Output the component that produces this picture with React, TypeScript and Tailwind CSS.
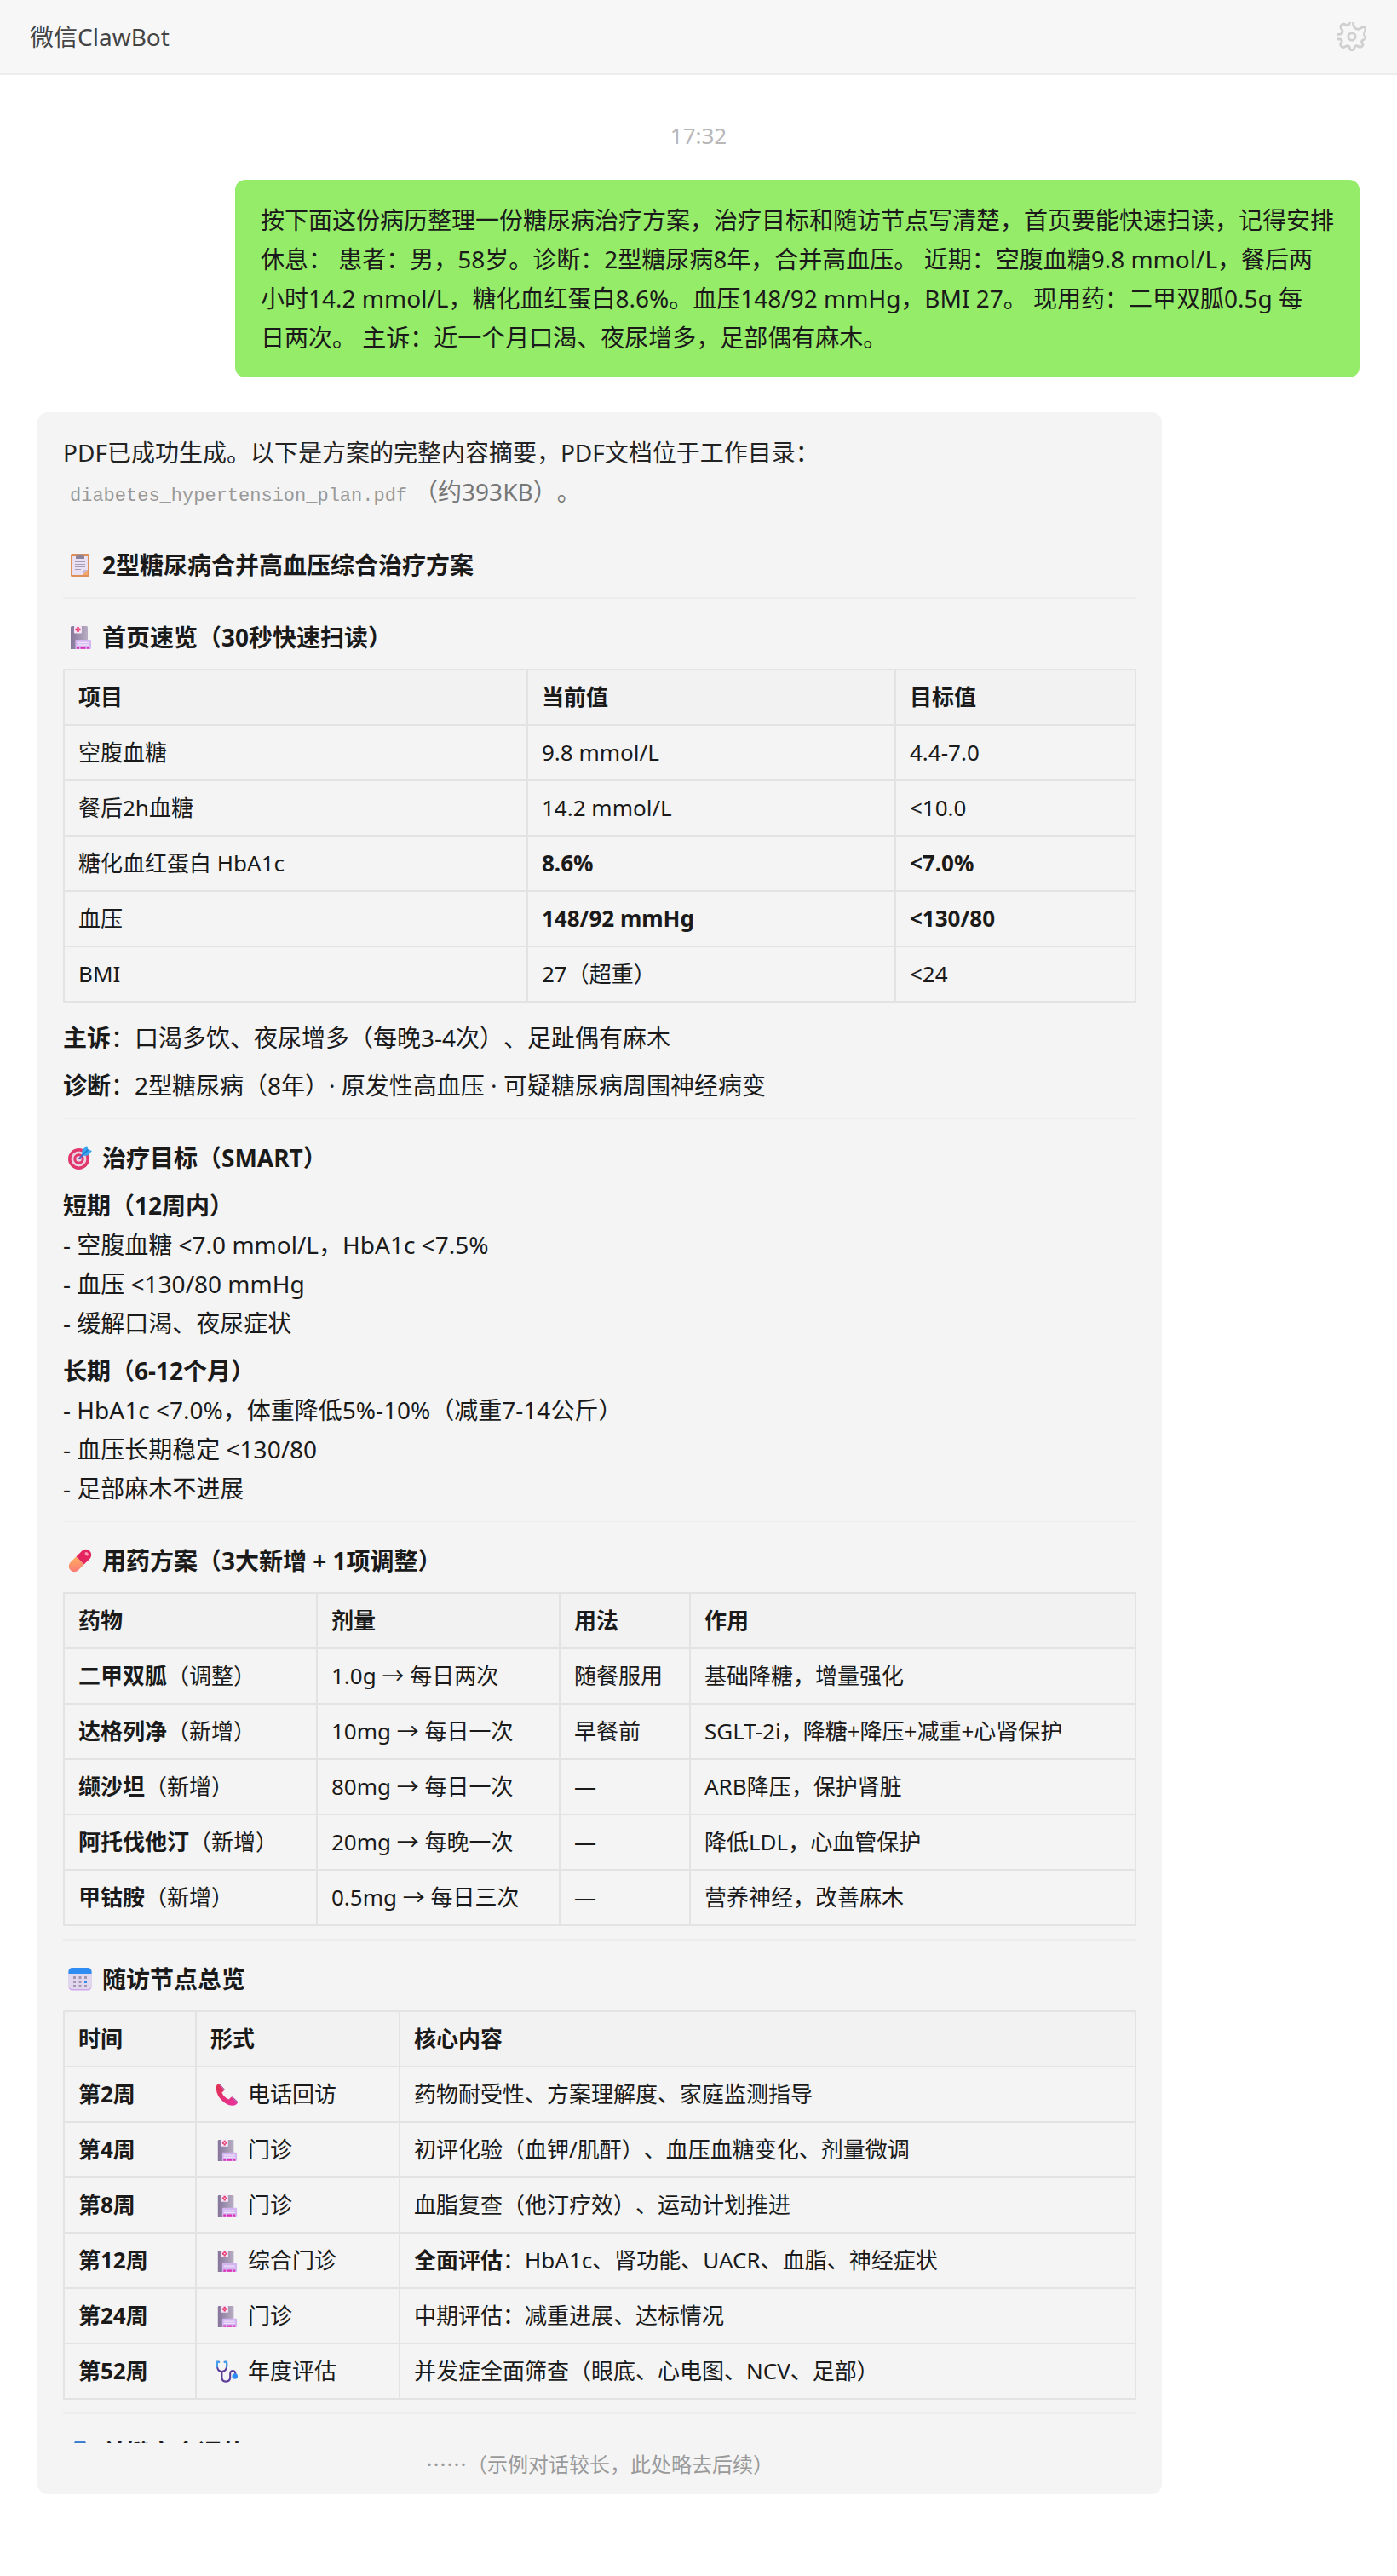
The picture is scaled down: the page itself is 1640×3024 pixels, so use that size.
import React from 'react';

interface IconProps {
    className?: string;
}

function GearIcon({ className }: IconProps) {
    return (
        <svg className={className} viewBox="0 0 102 102" fill="none" stroke="currentColor" strokeWidth="8.500" strokeLinecap="round" strokeLinejoin="round" aria-hidden="true">
            <circle cx="51" cy="51" r="12.700" />
            <path d="M-4 43H6Q18 43 18 32Q18 28 14 24Q9 17 14 10Q21 4 29 9Q36 14 41 8Q44 5 44 -4" />
            <path d="M56 -4V8Q58 24 72 25Q78 25 84 20L97 15Q101 26 96 36Q92 45 98 50Q103 58 94 61Q84 64 86 72Q92 79 88 84Q81 91 74 85Q62 80 60 89Q60 98 51 98Q43 98 43 89Q41 80 29 85Q22 92 14 85Q8 79 14 72Q20 62 8 60Q2 60 -4 58" />
        </svg>
    );
}

function ClipboardIcon({ className }: IconProps) {
    return (
        <svg className={className} viewBox="0 0 28 28" aria-hidden="true">
            <rect x="3" y="1" width="22" height="27" rx="1.500" fill="#dd8f5b" />
            <path d="M5 4h18v16l-6 6H5z" fill="#e9e0f2" />
            <path d="M23 20l-6 6v-4.500q0-1.500 1.500-1.500z" fill="#c9b8dc" />
            <path d="M23 20l-6 6h6z" fill="#f3a66a" />
            <path d="M9 7V4.500Q9 3 10.500 3H12a2.200 2.200 0 0 1 4 0h1.500Q19 3 19 4.500V7z" fill="#8d8499" />
            <path d="M8 10.500h12M8 13.500h12M8 16.500h12M8 19.500h7" stroke="#a79bb5" strokeWidth="1.200" />
        </svg>
    );
}

function HospitalIcon({ className }: IconProps) {
    return (
        <svg className={className} viewBox="0 0 28 28" aria-hidden="true">
            <defs>
                <linearGradient id="tower" x1="0" x2="1">
                    <stop offset="0" stopColor="#85759b" />
                    <stop offset="1" stopColor="#b9aec3" />
                </linearGradient>
            </defs>
            <path d="M3 2.500Q3 1 4.500 1H22q1 0 1 1.500V28H3z" fill="url(#tower)" />
            <rect x="7" y="0.500" width="9" height="9" rx="1" fill="#f3e6f6" />
            <path d="M11.500 2v6M8.500 5h6" stroke="#e8356d" strokeWidth="2.400" />
            <path d="M11.500 4v2M10.500 5h2" stroke="#f3e6f6" strokeWidth="0.900" />
            <rect x="8.500" y="17" width="18.500" height="11" rx="1" fill="#d3b5f0" />
            <path d="M10.500 20.500h14M10.500 23h14" stroke="#efe2fa" strokeWidth="1.300" />
            <path d="M10 26.500h3M14.500 26.500h6M22 26.500h3" stroke="#e02fb5" strokeWidth="2.400" />
        </svg>
    );
}

function TargetIcon({ className }: IconProps) {
    return (
        <svg className={className} viewBox="0 0 28 28" aria-hidden="true">
            <circle cx="12.500" cy="15.500" r="12.500" fill="#e0386c" />
            <circle cx="12.500" cy="15.500" r="9" fill="#ecd3e2" />
            <circle cx="12.500" cy="15.500" r="6.200" fill="#e0386c" />
            <circle cx="12.500" cy="15.500" r="3.200" fill="#ecd3e2" />
            <path d="M12.500 15.500l8-8" stroke="#5a5fc4" strokeWidth="1.800" />
            <path d="M16 12l.5-7 5.500-5 1.500 4.500L28 6l-5 5.500z" fill="#38a5ef" />
            <path d="M16 12l7.500-7.500" stroke="#1c73d1" strokeWidth="1.500" />
        </svg>
    );
}

function PillIcon({ className }: IconProps) {
    return (
        <svg className={className} viewBox="0 0 28 28" aria-hidden="true">
            <defs>
                <linearGradient id="pillLow" x1="0" y1="0" x2="1" y2="1">
                    <stop offset="0" stopColor="#ffae5c" />
                    <stop offset="1" stopColor="#f9737b" />
                </linearGradient>
            </defs>
            <g transform="rotate(45 14 14)">
                <path d="M7.500 14V4.500a6.500 6.500 0 0 1 13 0V14z" fill="#e3245f" />
                <path d="M7.500 14V23.500a6.500 6.500 0 0 0 13 0V14z" fill="url(#pillLow)" />
                <ellipse cx="14" cy="3" rx="2.500" ry="1.800" fill="#ff9ab4" />
            </g>
        </svg>
    );
}

function CalendarIcon({ className }: IconProps) {
    return (
        <svg className={className} viewBox="0 0 28 28" aria-hidden="true">
            <rect x="0.500" y="1" width="27" height="26.500" rx="4.500" fill="#cda6ec" />
            <rect x="0.500" y="1" width="27" height="25" rx="4.500" fill="#e2d8ee" />
            <path d="M0.500 8V5.500A4.500 4.500 0 0 1 5 1h18a4.500 4.500 0 0 1 4.500 4.500V8z" fill="#2f8cf2" />
            <path d="M6 11h3v3H6zM12.500 11h3v3h-3zM19 11h3v3h-3zM6 16h3v3H6zM12.500 16h3v3h-3zM6 21h3v3H6zM12.500 21h3v3h-3zM19 21h3v3h-3z" fill="#a396b3" />
            <path d="M19 16h3v3h-3z" fill="#2f8cf2" />
        </svg>
    );
}

function PhoneIcon({ className }: IconProps) {
    return (
        <svg className={className} viewBox="0 0 28 28" aria-hidden="true">
            <defs>
                <linearGradient id="handset" x1="0" y1="0" x2="1" y2="1">
                    <stop offset="0" stopColor="#e0304c" />
                    <stop offset="1" stopColor="#e833a4" />
                </linearGradient>
            </defs>
            <path d="M1 4Q1 1 4 0.500L11 8q-1 2-3 3 2 6 9 9 1-2 3-3l8 7q-1 3-4 3.500Q16 28.500 9 22 0 14 1 4z" fill="url(#handset)" />
            <path d="M4 0.500Q5 0 6 1l5 5.500q1 1 0 1.500zM20 17q1-1 2 0l5.500 5q1 1 .5 2z" fill="#a8479f" />
        </svg>
    );
}

function StethoscopeIcon({ className }: IconProps) {
    return (
        <svg className={className} viewBox="0 0 28 28" fill="none" aria-hidden="true">
            <path d="M4.500 2H2q-.5 8 2 10.500 4 3 8 0Q15 10 14 2h-2.500" stroke="#5d3c9b" strokeWidth="2.200" strokeLinecap="round" />
            <path d="M8 14v7q0 5.500 5 5.500 5.500 0 5.500-5.500v-4q0-4 3.500-4t3 5" stroke="#5d3c9b" strokeWidth="2.200" />
            <path d="M1.900 8V2h2.600M14.100 8V2h-2.600" stroke="#3ea2f0" strokeWidth="2.200" strokeLinecap="round" />
            <circle cx="24.500" cy="20" r="3.500" fill="#2a8cf4" />
        </svg>
    );
}

function CapsuleIcon({ className }: IconProps) {
    return (
        <svg className={className} viewBox="0 0 28 28" aria-hidden="true">
            <rect x="7" y="0" width="14" height="28" rx="4" fill="#3f7fd0" />
        </svg>
    );
}

const overviewRows = [
    { item: '空腹血糖', now: '9.8 mmol/L', goal: '4.4-7.0' },
    { item: '餐后2h血糖', now: '14.2 mmol/L', goal: '<10.0' },
    { item: '糖化血红蛋白 HbA1c', now: '8.6%', goal: '<7.0%', strong: true },
    { item: '血压', now: '148/92 mmHg', goal: '<130/80', strong: true },
    { item: 'BMI', now: '27（超重）', goal: '<24' },
];

const drugRows = [
    { name: '二甲双胍', tag: '（调整）', dose: '1.0g → 每日两次', usage: '随餐服用', effect: '基础降糖，增量强化' },
    { name: '达格列净', tag: '（新增）', dose: '10mg → 每日一次', usage: '早餐前', effect: 'SGLT-2i，降糖+降压+减重+心肾保护' },
    { name: '缬沙坦', tag: '（新增）', dose: '80mg → 每日一次', usage: '—', effect: 'ARB降压，保护肾脏' },
    { name: '阿托伐他汀', tag: '（新增）', dose: '20mg → 每晚一次', usage: '—', effect: '降低LDL，心血管保护' },
    { name: '甲钴胺', tag: '（新增）', dose: '0.5mg → 每日三次', usage: '—', effect: '营养神经，改善麻木' },
];

const visitRows = [
    { week: '第2周', icon: PhoneIcon, form: '电话回访', lead: '', content: '药物耐受性、方案理解度、家庭监测指导' },
    { week: '第4周', icon: HospitalIcon, form: '门诊', lead: '', content: '初评化验（血钾/肌酐）、血压血糖变化、剂量微调' },
    { week: '第8周', icon: HospitalIcon, form: '门诊', lead: '', content: '血脂复查（他汀疗效）、运动计划推进' },
    { week: '第12周', icon: HospitalIcon, form: '综合门诊', lead: '全面评估', content: '：HbA1c、肾功能、UACR、血脂、神经症状' },
    { week: '第24周', icon: HospitalIcon, form: '门诊', lead: '', content: '中期评估：减重进展、达标情况' },
    { week: '第52周', icon: StethoscopeIcon, form: '年度评估', lead: '', content: '并发症全面筛查（眼底、心电图、NCV、足部）' },
];

function Heading({ icon: Icon, children }: { icon: React.ComponentType<IconProps>; children: React.ReactNode }) {
    return (
        <h2 className="flex items-center font-bold">
            <Icon className="ml-1.5 mr-3 h-7 w-7 shrink-0" />
            {children}
        </h2>
    );
}

function Divider() {
    return <hr className="mt-[15px] mb-[22px] border-t-2 border-[#ededed]" />;
}

interface DataTableProps {
    widths: string[];
    head: string[];
    children: React.ReactNode;
}

function DataTable({ widths, head, children }: DataTableProps) {
    return (
        <table className="mt-3.5 w-full table-fixed border-collapse text-left text-[26px] leading-[43px] [&_td]:border-2 [&_td]:border-[#e3e3e3] [&_td]:px-4 [&_td]:py-2.5 [&_th]:border-2 [&_th]:border-[#e3e3e3] [&_th]:bg-[#f2f2f2] [&_th]:px-4 [&_th]:py-2.5">
            <colgroup>
                {widths.map((w, i) => (
                    <col key={i} className={w} />
                ))}
            </colgroup>
            <thead>
                <tr>
                    {head.map((h) => (
                        <th key={h} scope="col">{h}</th>
                    ))}
                </tr>
            </thead>
            <tbody>{children}</tbody>
        </table>
    );
}

export default function App() {
    return (
        <div className="min-h-screen bg-white font-['Noto_Sans','Noto_Sans_CJK_SC',sans-serif] text-[28px] leading-[46px] text-[#1a1a1a] [text-spacing-trim:space-all]">
            <header className="flex h-[88px] items-center justify-between border-b-2 border-[#ededed] bg-[#f7f7f7] pr-9 pl-[35px]">
                <h1 className="text-[#444]">微信ClawBot</h1>
                <button type="button" aria-label="设置" className="text-[#d0d0d0]">
                    <GearIcon className="h-[34px] w-[34px]" />
                </button>
            </header>

            <main className="flex flex-col px-11 pt-12 pb-24">
                <time className="self-center text-[26px] text-[#b8b8b8]">17:32</time>

                {/* User message */}
                <div className="mt-[29px] w-[1320px] max-w-full self-end rounded-xl bg-[#95ec69] px-[30px] py-6">
                    <p>
                        按下面这份病历整理一份糖尿病治疗方案，治疗目标和随访节点写清楚，首页要能快速扫读，记得安排休息： 患者：男，58岁。诊断：2型糖尿病8年，合并高血压。 近期：空腹血糖9.8 mmol/L，餐后两小时14.2 mmol/L，糖化血红蛋白8.6%。血压148/92 mmHg，BMI 27。 现用药：二甲双胍0.5g 每
                        <br />
                        日两次。 主诉：近一个月口渴、夜尿增多，足部偶有麻木。
                    </p>
                </div>

                {/* Bot reply */}
                <article className="mt-[41px] w-[1320px] max-w-full rounded-xl bg-[#f4f4f4] px-[30px] pt-6 pb-3">
                    <p className="text-[#222]">
                        PDF已成功生成。以下是方案的完整内容摘要，PDF文档位于工作目录：
                        <br />
                        <span className="text-[#777]">
                            <code className="px-2 font-['Liberation_Mono',monospace] text-[22px] leading-none text-[#999]">diabetes_hypertension_plan.pdf</code>
                            （约393KB）。
                        </span>
                    </p>

                    <div className="mt-10">
                        <Heading icon={ClipboardIcon}>2型糖尿病合并高血压综合治疗方案</Heading>
                    </div>

                    <Divider />
                    <Heading icon={HospitalIcon}>首页速览（30秒快速扫读）</Heading>
                    <DataTable widths={['w-[544px]', 'w-[432px]', 'w-auto']} head={['项目', '当前值', '目标值']}>
                        {overviewRows.map((row) => (
                            <tr key={row.item}>
                                <td>{row.item}</td>
                                <td className={row.strong ? 'font-bold' : ''}>{row.now}</td>
                                <td className={row.strong ? 'font-bold' : ''}>{row.goal}</td>
                            </tr>
                        ))}
                    </DataTable>
                    <p className="mt-[18px]"><strong>主诉</strong>：口渴多饮、夜尿增多（每晚3-4次）、足趾偶有麻木</p>
                    <p className="mt-2.5"><strong>诊断</strong>：2型糖尿病（8年）· 原发性高血压 · 可疑糖尿病周围神经病变</p>

                    <Divider />
                    <Heading icon={TargetIcon}>治疗目标（SMART）</Heading>
                    <p className="mt-2.5">
                        <strong>短期（12周内）</strong><br />
                        - 空腹血糖 &lt;7.0 mmol/L，HbA1c &lt;7.5%<br />
                        - 血压 &lt;130/80 mmHg<br />
                        - 缓解口渴、夜尿症状
                    </p>
                    <p className="mt-2.5">
                        <strong>长期（6-12个月）</strong><br />
                        - HbA1c &lt;7.0%，体重降低5%-10%（减重7-14公斤）<br />
                        - 血压长期稳定 &lt;130/80<br />
                        - 足部麻木不进展
                    </p>

                    <Divider />
                    <Heading icon={PillIcon}>用药方案（3大新增 + 1项调整）</Heading>
                    <DataTable widths={['w-[297px]', 'w-[285px]', 'w-[153px]', 'w-auto']} head={['药物', '剂量', '用法', '作用']}>
                        {drugRows.map((row) => (
                            <tr key={row.name}>
                                <td><strong>{row.name}</strong>{row.tag}</td>
                                <td>{row.dose}</td>
                                <td>{row.usage}</td>
                                <td>{row.effect}</td>
                            </tr>
                        ))}
                    </DataTable>

                    <Divider />
                    <Heading icon={CalendarIcon}>随访节点总览</Heading>
                    <DataTable widths={['w-[155px]', 'w-[239px]', 'w-auto']} head={['时间', '形式', '核心内容']}>
                        {visitRows.map((row) => (
                            <tr key={row.week}>
                                <td><strong>{row.week}</strong></td>
                                <td>
                                    <span className="flex items-center">
                                        <row.icon className="ml-1.5 mr-3 h-[26px] w-[26px] shrink-0" />
                                        {row.form}
                                    </span>
                                </td>
                                <td>{row.lead && <strong>{row.lead}</strong>}{row.content}</td>
                            </tr>
                        ))}
                    </DataTable>

                    {/* The next section is cut off after its first pixels */}
                    <div className="h-[51px] overflow-hidden">
                        <Divider />
                        <Heading icon={CapsuleIcon}>关键安全评估</Heading>
                    </div>
                    <p className="text-center font-['Noto_Sans_CJK_SC',sans-serif] text-2xl leading-[48px] text-[#9a9a9a]">……（示例对话较长，此处略去后续）</p>
                </article>
            </main>
        </div>
    );
}
